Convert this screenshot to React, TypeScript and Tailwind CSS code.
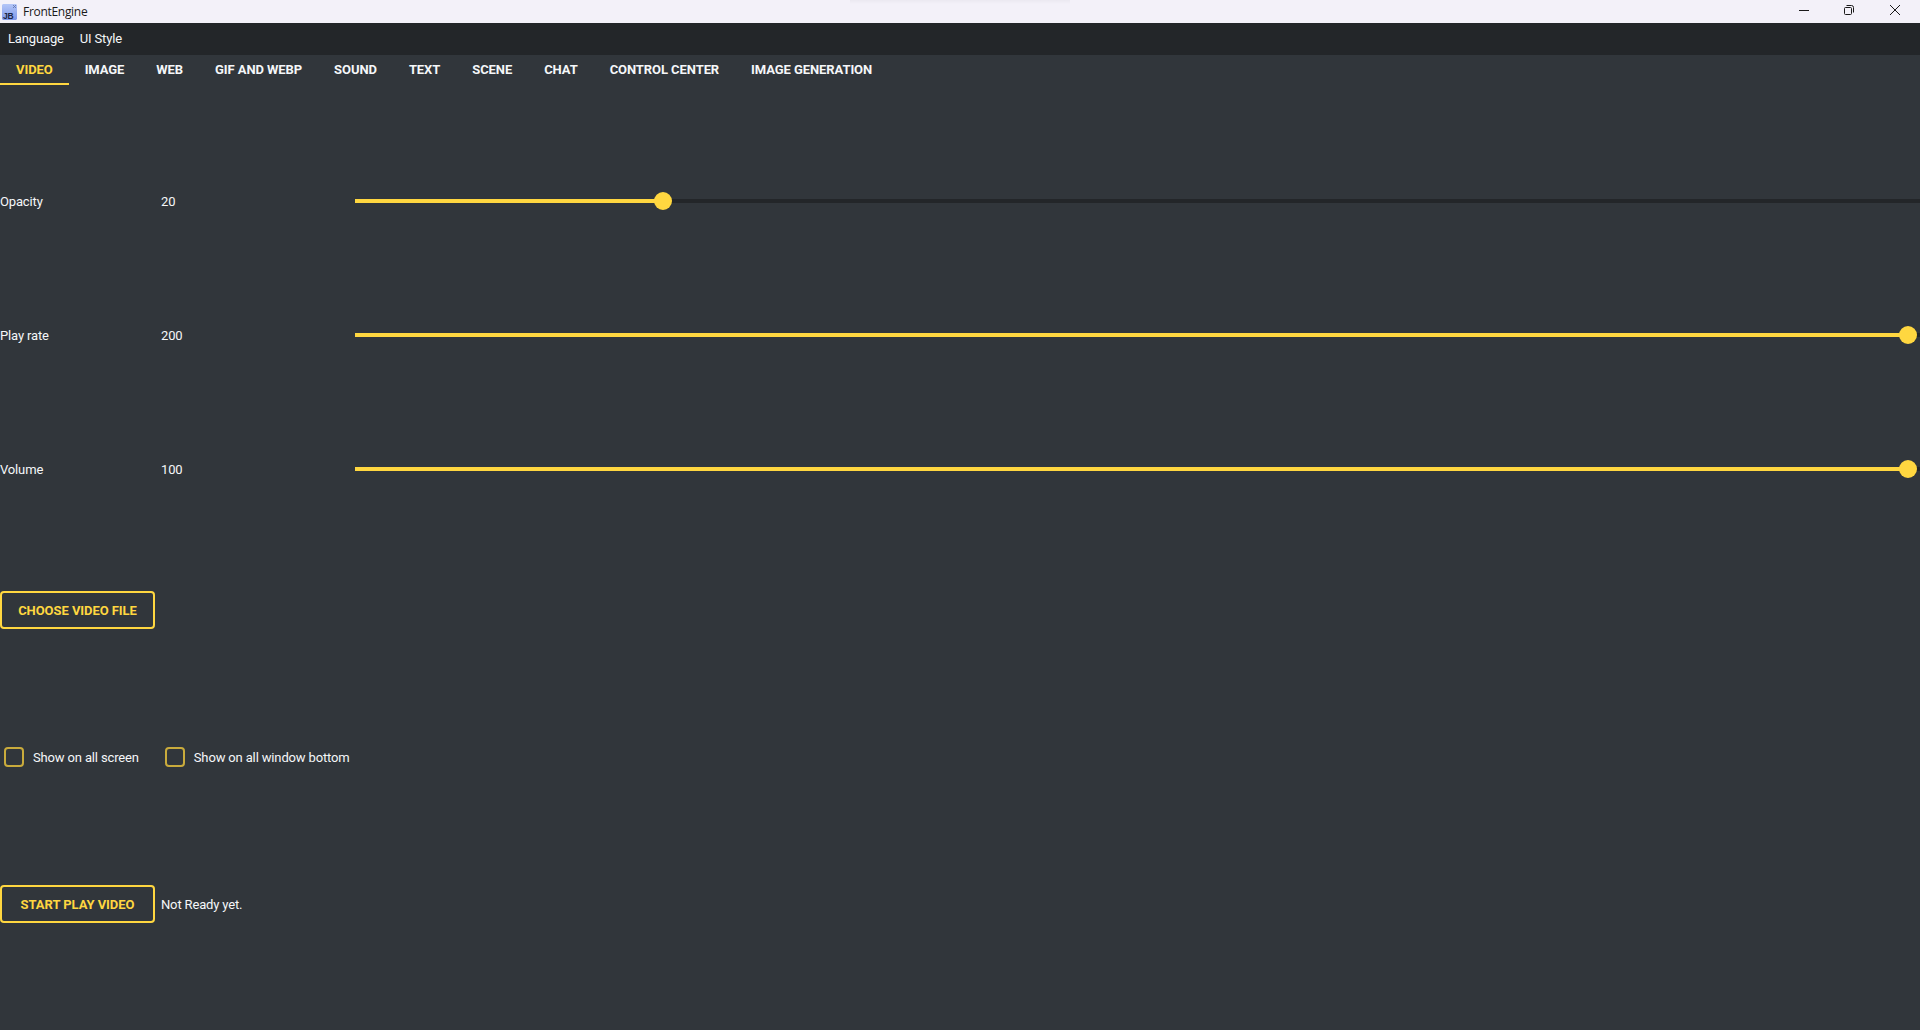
import { useState } from 'react'

const tabs = ['VIDEO', 'IMAGE', 'WEB', 'GIF AND WEBP', 'SOUND', 'TEXT', 'SCENE', 'CHAT', 'CONTROL CENTER', 'IMAGE GENERATION']

const sliders = [
    { label: 'Opacity', value: 20, thumb: 308 },
    { label: 'Play rate', value: 200, thumb: 1553 },
    { label: 'Volume', value: 100, thumb: 1553 },
]

const AppIcon = () => (
    <svg width="16" height="16" viewBox="0 0 16 16" className="shrink-0">
        <defs>
            <linearGradient id="iconBg" x1="0" y1="0" x2="0" y2="1">
                <stop offset="0" stopColor="#b4c6f7" />
                <stop offset="1" stopColor="#7d97ea" />
            </linearGradient>
        </defs>
        <path d="M1 0h13l1 1v14l-1 1H1l-1-1V1z" fill="url(#iconBg)" />
        <path d="M11 1l1.500 1.500L14 1M11 4l1.500-1.500L14 4" stroke="#5a6da8" strokeWidth="0.8" fill="none" />
        <text x="1" y="14.500" fontSize="8.500" fontWeight="700" fontFamily="'Liberation Sans', sans-serif" fill="#1c2745">JB</text>
    </svg>
)

const TitleBar = () => (
    <div className="relative flex h-[23px] items-center bg-[#f3f1f9] pl-[2px] text-[12px] tracking-[-0.3px] text-[#1a1a1a] font-['Open_Sans','Noto_Sans',sans-serif]">
        <AppIcon />
        <span className="ml-[5px] leading-none">FrontEngine</span>
        <div className="absolute left-[850px] top-0 h-[4px] w-[220px] bg-gradient-to-b from-[#ebe9f1] to-transparent" />
        <div className="mb-[3px] ml-auto flex items-center">
            <svg width="10" height="10" viewBox="0 0 10 10" className="mr-[35px]">
                <path d="M0 5.500h10" stroke="#1a1a1a" strokeWidth="1" />
            </svg>
            <svg width="10" height="10" viewBox="0 0 10 10" className="mr-[36px]">
                <rect x="0.500" y="2.500" width="7" height="7" rx="1" fill="none" stroke="#1a1a1a" />
                <path d="M2.500 0.500h5a2 2 0 0 1 2 2v5" fill="none" stroke="#1a1a1a" />
            </svg>
            <svg width="10" height="10" viewBox="0 0 10 10" className="mr-[20px]">
                <path d="M0 0l10 10M10 0L0 10" stroke="#1a1a1a" strokeWidth="1" />
            </svg>
        </div>
    </div>
)

const Slider = ({ thumb }: { thumb: number }) => (
    <div className="relative h-[4px] flex-1 bg-[#232629]">
        <div className="h-full bg-[#ffd740]" style={{ width: thumb }} />
        <div className="absolute top-[-7px] h-[18px] w-[18px] -translate-x-1/2 rounded-full bg-[#ffd740]" style={{ left: thumb }} />
    </div>
)

const OutlineButton = ({ children }: { children: string }) => (
    <button className="h-[38px] w-[155px] rounded-[4px] border-2 border-[#ffd740] pt-[2px] text-[13px] font-bold tracking-[-0.06px] text-[#ffd740]">
        {children}
    </button>
)

const Check = ({ label }: { label: string }) => (
    <label className="flex items-center gap-[9px]">
        <span className="h-[20px] w-[20px] rounded-[4px] border-2 border-[#c9ab3c]" />
        <span className="pt-[2px]">{label}</span>
    </label>
)

export default function App() {
    const [active] = useState(0)
    return (
        <div className="flex h-[1030px] w-[1920px] flex-col overflow-hidden bg-[#31363b] text-[13px] tracking-[-0.15px] text-[#f5f7f9] font-['Roboto',sans-serif]">
            <TitleBar />
            <div className="flex h-[32px] items-center gap-[16px] bg-[#232629] px-[8px]">
                <span>Language</span>
                <span>UI Style</span>
            </div>
            <div className="flex h-[30px] items-stretch tracking-[-0.08px]">
                {tabs.map((tab, i) => (
                    <div
                        key={tab}
                        className={
                            i === active
                                ? 'flex items-center border-b-2 border-[#ffd740] px-[16px] pt-[2px] font-bold text-[#ffd740]'
                                : 'flex items-center border-b-2 border-transparent px-[16px] pt-[2px] font-bold'
                        }
                    >
                        {tab}
                    </div>
                ))}
            </div>

            <div className="flex flex-col pt-[49px]">
                {sliders.map((s) => (
                    <div key={s.label} className="flex h-[134px] items-center">
                        <span className="w-[161px] pt-[2px]">{s.label}</span>
                        <span className="w-[194px] pt-[2px]">{s.value}</span>
                        <Slider thumb={s.thumb} />
                    </div>
                ))}
                <div className="flex h-[148px] items-center">
                    <OutlineButton>CHOOSE VIDEO FILE</OutlineButton>
                </div>
                <div className="flex h-[146px] items-center gap-[26px] pl-[4px]">
                    <Check label="Show on all screen" />
                    <Check label="Show on all window bottom" />
                </div>
                <div className="flex h-[148px] items-center gap-[6px]">
                    <OutlineButton>START PLAY VIDEO</OutlineButton>
                    <span className="pt-[2px]">Not Ready yet.</span>
                </div>
            </div>
        </div>
    )
}
